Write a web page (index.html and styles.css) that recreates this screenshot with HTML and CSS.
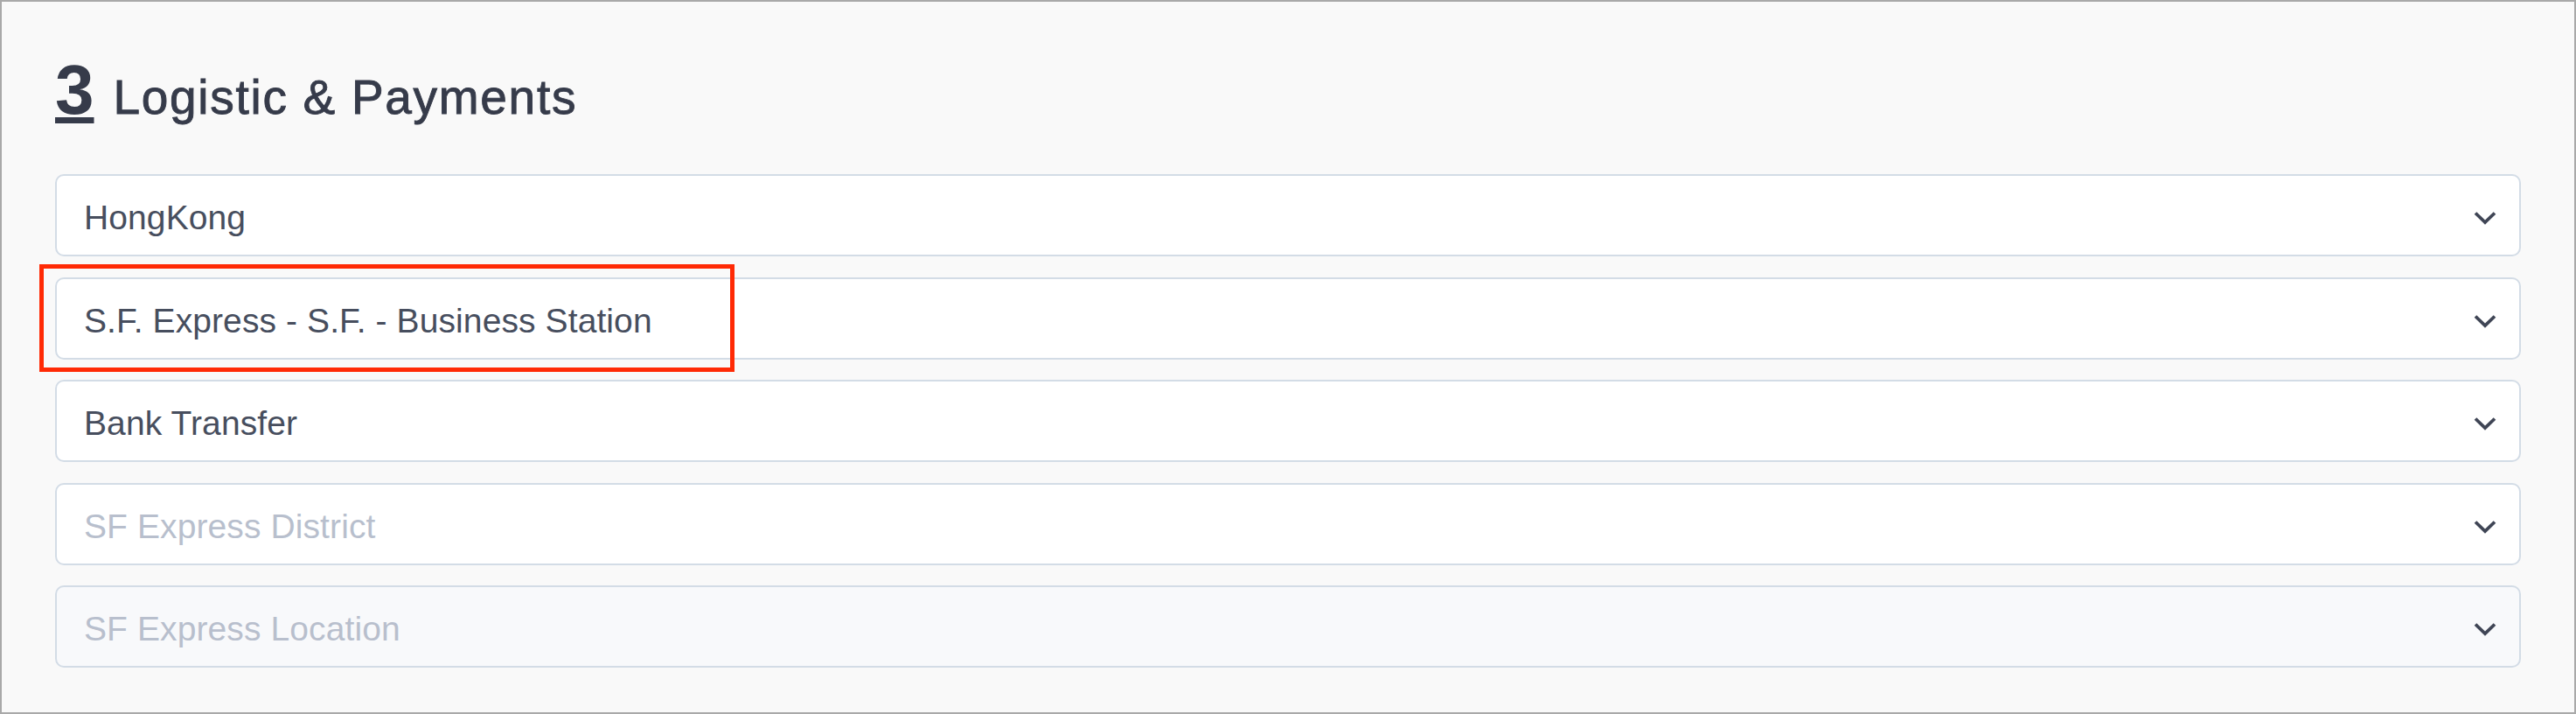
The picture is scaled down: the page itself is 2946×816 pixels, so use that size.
FILE: index.html
```html
<!DOCTYPE html>
<html lang="en">
<head>
<meta charset="utf-8">
<title>Logistic &amp; Payments</title>
<link rel="stylesheet" href="styles.css">
</head>
<body>
<div class="frame">
  <h2 class="heading"><span class="step">3</span><span class="title">Logistic &amp; Payments</span></h2>
  <div class="fields">
    <div class="select"><span class="value">HongKong</span><svg class="chev" viewBox="0 0 26 16" width="26" height="16"><polyline points="2,2.5 13,13 24,2.5"/></svg></div>
    <div class="select"><span class="value">S.F. Express - S.F. - Business Station</span><svg class="chev" viewBox="0 0 26 16" width="26" height="16"><polyline points="2,2.5 13,13 24,2.5"/></svg></div>
    <div class="select"><span class="value">Bank Transfer</span><svg class="chev" viewBox="0 0 26 16" width="26" height="16"><polyline points="2,2.5 13,13 24,2.5"/></svg></div>
    <div class="select"><span class="value placeholder">SF Express District</span><svg class="chev" viewBox="0 0 26 16" width="26" height="16"><polyline points="2,2.5 13,13 24,2.5"/></svg></div>
    <div class="select disabled"><span class="value placeholder">SF Express Location</span><svg class="chev" viewBox="0 0 26 16" width="26" height="16"><polyline points="2,2.5 13,13 24,2.5"/></svg></div>
  </div>
  <div class="highlight"></div>
</div>
</body>
</html>
```

FILE: styles.css
```css
html, body {
  margin: 0;
  padding: 0;
  background: #f9f9f9;
}

.frame {
  position: relative;
  width: 2946px;
  height: 816px;
  box-sizing: border-box;
  border: 2px solid #a9a9a9;
  background: #f9f9f9;
  padding: 61px 61px 0 61px;
  font-family: "Liberation Sans", Arial, Helvetica, sans-serif;
}

.heading {
  display: flex;
  align-items: baseline;
  gap: 22px;
  margin: 0 0 56px 0;
  height: 80px;
  line-height: 80px;
  font-weight: normal;
  color: #363b4a;
}

.step {
  font-size: 80px;
  font-weight: bold;
  text-decoration: underline;
  text-decoration-thickness: 7px;
  text-underline-offset: 4px;
}

.title {
  font-size: 55px;
  letter-spacing: 1.7px;
  -webkit-text-stroke: 0.9px #363b4a;
}

.fields {
  display: flex;
  flex-direction: column;
  gap: 23.5px;
}

.select {
  height: 94px;
  box-sizing: border-box;
  border: 2.5px solid #d3dce6;
  border-radius: 10px;
  background: #ffffff;
  display: flex;
  align-items: center;
  justify-content: space-between;
  padding: 6px 26px 0 31px;
}

.select.disabled {
  background: #f8f9fb;
}

.value {
  font-size: 39px;
  letter-spacing: 0.1px;
  line-height: 40px;
  color: #474e5e;
}

.value.placeholder {
  color: #b8bfcd;
}

.chev {
  display: block;
  width: 26px;
  height: 16px;
}

.chev polyline {
  fill: none;
  stroke: #3f4555;
  stroke-width: 3.8;
  stroke-linejoin: miter;
  stroke-linecap: butt;
}

.highlight {
  position: absolute;
  left: 43px;
  top: 300px;
  width: 795px;
  height: 123px;
  box-sizing: border-box;
  border: 5px solid #ff2a05;
}
```
